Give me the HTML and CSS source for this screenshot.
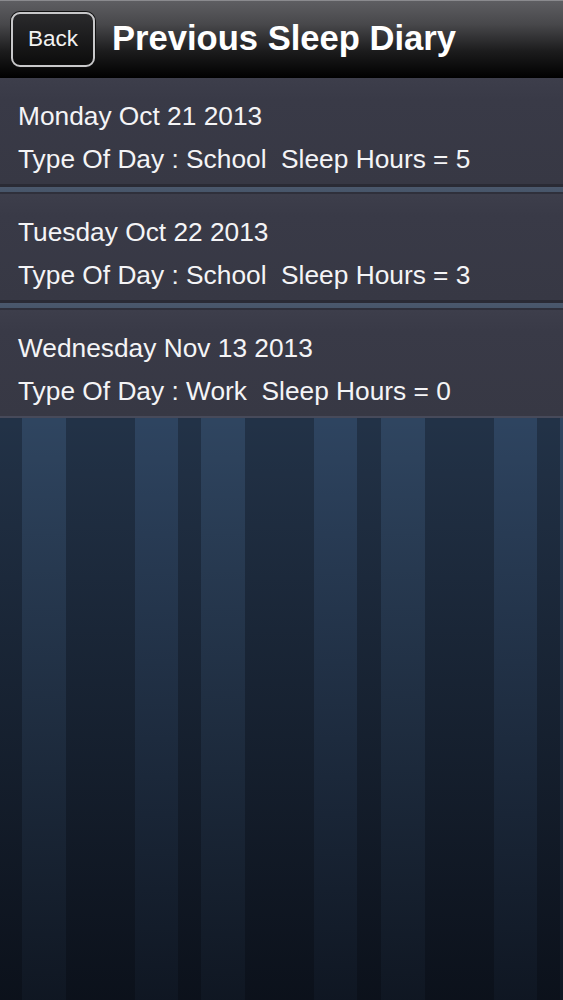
FILE: index.html
```html
<!DOCTYPE html>
<html>
<head>
<meta charset="utf-8">
<link rel="stylesheet" href="styles.css">
</head>
<body>
<div class="screen">
  <header class="navbar">
    <div class="back-btn">Back</div>
    <h1 class="title">Previous Sleep Diary</h1>
  </header>
  <section class="list">
    <div class="entry">
      <div class="line">Monday Oct 21 2013</div>
      <div class="line">Type Of Day : School&nbsp; Sleep Hours = 5</div>
    </div>
    <div class="divider"></div>
    <div class="entry">
      <div class="line">Tuesday Oct 22 2013</div>
      <div class="line">Type Of Day : School&nbsp; Sleep Hours = 3</div>
    </div>
    <div class="divider"></div>
    <div class="entry last">
      <div class="line">Wednesday Nov 13 2013</div>
      <div class="line">Type Of Day : Work&nbsp; Sleep Hours = 0</div>
    </div>
  </section>
</div>
</body>
</html>
```
FILE: styles.css
```css
html, body {
  margin: 0;
  padding: 0;
}
body {
  width: 563px;
  height: 1000px;
  overflow: hidden;
  font-family: "Liberation Sans", Arial, sans-serif;
  color: #ffffff;
  background:
    linear-gradient(to bottom, rgba(0,0,0,0) 0px, rgba(0,0,0,0) 420px, rgba(2,3,8,0.7) 1000px),
    repeating-linear-gradient(90deg,
      #223247 0px, #223247 22px,
      #2f4560 22px, #2f4560 66px,
      #223247 66px, #223247 135px,
      #2e4460 135px, #2e4460 178px,
      #223247 178px, #223247 179.3px);
}
.screen {
  display: flex;
  flex-direction: column;
  height: 1000px;
}
.navbar {
  height: 78px;
  display: flex;
  align-items: center;
  box-sizing: border-box;
  border-top: 1px solid #8a8a8e;
  background: linear-gradient(to bottom, #5e5e62 0%, #48484b 30%, #1c1c1d 65%, #000000 100%);
}
.back-btn {
  margin-left: 11px;
  width: 84px;
  height: 55px;
  box-sizing: border-box;
  border: 2px solid #c8c8ca;
  border-radius: 9px;
  box-shadow: 0 0 0 1px #111;
  background: linear-gradient(to bottom, #2a2a2c 0%, #0c0c0c 100%);
  display: flex;
  align-items: center;
  justify-content: center;
  font-size: 22.5px;
  color: #f2f2f2;
  margin-top: -1px;
}
.title {
  margin: 0 0 0 17px;
  font-size: 34.6px;
  font-weight: bold;
  color: #ffffff;
  margin-top: -2px;
}
.list {
  display: flex;
  flex-direction: column;
}
.entry {
  height: 106px;
  box-sizing: border-box;
  padding: 17px 0 0 18px;
  background: linear-gradient(to bottom, #3d3e4b 0%, #393a47 20%, #373844 100%);
}
.entry.last {
  height: 108px;
  border-bottom: 2px solid #474a5a;
}
.line {
  font-size: 26.3px;
  line-height: 43px;
  color: #f4f4f6;
  white-space: nowrap;
}
.divider {
  height: 10px;
  background: linear-gradient(to bottom, #2a2b35 0px, #2a2b35 3px, #4b586c 3px, #47566a 8px, #2f303b 8px, #2f303b 10px);
}
```
